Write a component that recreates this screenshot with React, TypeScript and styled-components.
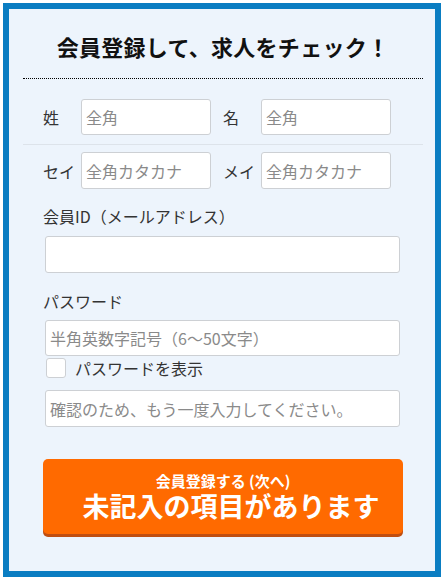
import React from "react";
import styled, { createGlobalStyle } from "styled-components";

const Global = createGlobalStyle`
  html, body { margin: 0; padding: 0; background: #ffffff; }
  body { font-family: "Noto Sans CJK JP", "Noto Sans", sans-serif; }
  * { box-sizing: border-box; }
`;

const Frame = styled.div`
  margin: 3px;
  width: 438px;
  height: 574px;
  border: 6px solid #0a7dc2;
  background: #edf4fc;
  padding: 0 12px 0 14px;
`;

const Header = styled.h2`
  margin: 0;
  padding: 22px 0 17px;
  text-align: center;
  font-size: 22px;
  line-height: 30px;
  font-weight: 700;
  letter-spacing: 0.3px;
  color: #111;
  border-bottom: 1px dotted #000;
`;

const NameRow = styled.div<{ $top: number; $bottom: number; $divider?: boolean }>`
  display: flex;
  align-items: center;
  padding-top: ${(p) => p.$top}px;
  padding-bottom: ${(p) => p.$bottom}px;
  border-bottom: ${(p) => (p.$divider ? "1px solid #dde3ea" : "none")};
`;

const NameLabel = styled.span<{ $w: number; $pl: number }>`
  width: ${(p) => p.$w}px;
  padding-left: ${(p) => p.$pl}px;
  font-size: 16px;
  color: #333;
  white-space: nowrap;
`;

const TextInput = styled.input<{ $w: number; $h: number }>`
  width: ${(p) => p.$w}px;
  height: ${(p) => p.$h}px;
  border: 1px solid #cdd0d4;
  border-radius: 3px;
  background: #fff;
  padding: 0 4px;
  font-family: "Noto Sans CJK JP", "Noto Sans", sans-serif;
  font-size: 16px;
  color: #333;
  outline: none;
  &::placeholder { color: #8a8a8a; }
`;

const Field = styled.div<{ $top: number }>`
  margin-top: ${(p) => p.$top}px;
  padding-left: 22px;
  display: flex;
  flex-direction: column;
`;

const FieldLabel = styled.label<{ $gap: number }>`
  margin-left: -2px;
  margin-bottom: ${(p) => p.$gap}px;
  font-size: 16px;
  line-height: 24px;
  color: #333;
`;

const CheckRow = styled.label`
  margin-top: 2px;
  display: flex;
  align-items: center;
  gap: 9px;
  height: 20px;
  font-size: 16px;
  color: #333;
  padding-left: 1px;
`;

const Box = styled.span`
  width: 20px;
  height: 20px;
  border: 1px solid #cdd0d4;
  border-radius: 3px;
  background: #fff;
`;

const Submit = styled.button`
  margin-top: 32px;
  margin-left: 20px;
  width: 360px;
  height: 75px;
  border: none;
  border-radius: 5px;
  background: #ff6a00;
  box-shadow: 0 3px 0 #c04e10;
  color: #fff;
  padding: 12px 0 0;
  display: flex;
  flex-direction: column;
  align-items: center;
  justify-content: flex-start;
  font-family: "Noto Sans CJK JP", "Noto Sans", sans-serif;
  font-weight: 700;
`;

const SubText = styled.span`
  font-size: 15px;
  line-height: 20px;
`;

const MainText = styled.span`
  font-size: 27px;
  line-height: 30px;
  padding-left: 16px;
`;

export default function App() {
  return (
    <>
      <Global />
      <Frame>
        <Header>会員登録して、求人をチェック！</Header>
        <NameRow $top={20} $bottom={9} $divider>
          <NameLabel $w={58} $pl={20}>姓</NameLabel>
          <TextInput $w={130} $h={36} placeholder="全角" />
          <NameLabel $w={50} $pl={12}>名</NameLabel>
          <TextInput $w={130} $h={36} placeholder="全角" />
        </NameRow>
        <NameRow $top={7} $bottom={0}>
          <NameLabel $w={58} $pl={20}>セイ</NameLabel>
          <TextInput $w={130} $h={37} placeholder="全角カタカナ" />
          <NameLabel $w={50} $pl={12}>メイ</NameLabel>
          <TextInput $w={130} $h={37} placeholder="全角カタカナ" />
        </NameRow>
        <Field $top={15}>
          <FieldLabel $gap={8}>会員ID（メールアドレス）</FieldLabel>
          <TextInput $w={355} $h={37} />
        </Field>
        <Field $top={16}>
          <FieldLabel $gap={7}>パスワード</FieldLabel>
          <TextInput $w={355} $h={36} type="password" placeholder="半角英数字記号（6〜50文字）" />
          <CheckRow>
            <Box />
            パスワードを表示
          </CheckRow>
        </Field>
        <Field $top={12}>
          <TextInput $w={355} $h={37} type="password" placeholder="確認のため、もう一度入力してください。" />
        </Field>
        <Submit type="button">
          <SubText>会員登録する (次へ)</SubText>
          <MainText>未記入の項目があります</MainText>
        </Submit>
      </Frame>
    </>
  );
}
